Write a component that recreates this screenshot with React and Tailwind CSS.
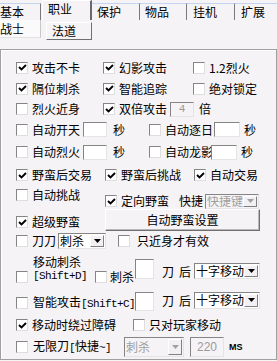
import React from "react";
import clsx from "clsx";

const MONO = "font-['Liberation_Mono',monospace] text-[11px] tracking-[-0.6px]";

// classic sunken checkbox
const Cb = ({ on, className }) => (
  <span
    className={clsx(
      "w-[12px] h-[12px] shrink-0 bg-white border border-t-[#858585] border-l-[#858585] border-b-[#dedede] border-r-[#dedede] flex items-center justify-center",
      className
    )}
  >
    {on && (
      <svg width="9" height="9" viewBox="0 0 9 9">
        <path d="M1 4 L3.5 6.5 L8 2" stroke="#000" strokeWidth="1.9" fill="none" />
      </svg>
    )}
  </span>
);

const Check = ({ on, children, className }) => (
  <div className={clsx("flex items-center gap-[4px] shrink-0", className)}>
    <Cb on={on} />
    <span className="whitespace-nowrap">{children}</span>
  </div>
);

const Field = ({ value, disabled, className }) => (
  <div
    className={clsx(
      "shrink-0 flex items-center justify-center border border-t-[#858585] border-l-[#858585] border-b-[#e4e4e4] border-r-[#e4e4e4]",
      disabled ? "bg-[#f6f3f6] text-[#9a9a9a]" : "bg-white",
      className
    )}
  >
    {value}
  </div>
);

const Arrow = ({ disabled }) => (
  <span className="w-[14px] h-full shrink-0 flex items-center justify-center bg-[#f3f0f3] border border-t-white border-l-white border-b-[#808080] border-r-[#808080]">
    <svg width="7" height="4" viewBox="0 0 7 4">
      <path d="M0 0 H7 L3.5 4 Z" fill={disabled ? "#a0a0a0" : "#000"} />
    </svg>
  </span>
);

const Select = ({ value, disabled, className }) => (
  <div
    className={clsx(
      "shrink-0 flex items-stretch border border-t-[#858585] border-l-[#858585] border-b-[#e4e4e4] border-r-[#e4e4e4] p-[1px]",
      disabled ? "bg-[#f6f3f6] text-[#a0a0a0]" : "bg-white",
      className
    )}
  >
    <span className="flex-1 overflow-hidden whitespace-nowrap flex items-center">{value}</span>
    <Arrow disabled={disabled} />
  </div>
);

export default function App() {
  return (
    <div className="w-[277px] h-[361px] bg-[#f6f3f6] text-black text-[12px] leading-[14px] font-['Noto_Sans_CJK_SC',sans-serif] overflow-hidden select-none">
      {/* main tabs */}
      <div className="flex h-[20px]">
        <div className="w-[41px] mt-[3px] border-t border-t-[#c4d4ee] border-r border-r-[#7a7a7a] flex items-center">基本</div>
        <div className="ml-[1px] w-[50px] border-t border-l border-t-white border-l-white border-r-2 border-r-[#6a6a6a] pl-[5px] pt-[1px]">职业</div>
        <div className="w-[48px] mt-[3px] border-t border-t-[#c4d4ee] border-r border-r-[#7a7a7a] pl-[5px] flex items-center">保护</div>
        <div className="w-[47px] mt-[3px] border-t border-t-[#c4d4ee] border-r border-r-[#7a7a7a] pl-[5px] flex items-center">物品</div>
        <div className="w-[48px] mt-[3px] border-t border-t-[#c4d4ee] border-r border-r-[#7a7a7a] pl-[6px] flex items-center">挂机</div>
        <div className="flex-1 mt-[3px] border-t border-t-[#c4d4ee] pl-[6px] flex items-center">扩展</div>
      </div>

      {/* sub tabs */}
      <div className="flex h-[21px]">
        <div className="w-[41px] h-[18px] bg-[#fbfafb] border-r border-b border-r-[#c8c8c8] border-b-[#e2e2e2] flex items-center">战士</div>
        <div className="ml-[5px] mt-[2px] w-[46px] h-[18px] border border-t-white border-l-white border-r-[#707070] border-b-[#707070] pl-[5px] flex items-center">法道</div>
      </div>

      {/* panel */}
      <div className="mt-[8px] h-[311px] border border-[#a0a0a0] shadow-[inset_1px_1px_0_#ffffff] pt-[7px]">
        <div className="flex items-center h-[21px] pl-[15px]">
          <Check on className="w-[87px]">攻击不卡</Check>
          <Check on className="w-[90px]">幻影攻击</Check>
          <Check>1.2烈火</Check>
        </div>
        <div className="flex items-center h-[21px] pl-[15px]">
          <Check on className="w-[87px]">隔位刺杀</Check>
          <Check on className="w-[90px]">智能追踪</Check>
          <Check>绝对锁定</Check>
        </div>
        <div className="flex items-center h-[20px] pl-[15px]">
          <Check className="w-[87px]">烈火近身</Check>
          <Check on>双倍攻击</Check>
          <Field value="4" disabled className="ml-[3px] w-[24px] h-[15px] font-['Liberation_Mono',monospace] text-[11px]" />
          <span className="ml-[5px]">倍</span>
        </div>
        <div className="flex items-center h-[21px] pl-[15px]">
          <div className="w-[133px] flex items-center shrink-0">
            <Check>自动开天</Check>
            <Field className="ml-[3px] w-[24px] h-[15px]" />
            <span className="ml-[6px]">秒</span>
          </div>
          <Check>自动逐日</Check>
          <Field className="ml-[1px] w-[26px] h-[15px]" />
          <span className="ml-[4px]">秒</span>
        </div>
        <div className="flex items-center h-[24px] pl-[15px]">
          <div className="w-[133px] flex items-center shrink-0">
            <Check>自动烈火</Check>
            <Field className="ml-[3px] w-[24px] h-[15px]" />
            <span className="ml-[6px]">秒</span>
          </div>
          <Check>自动龙影</Check>
          <Field className="-ml-[2px] w-[26px] h-[15px] relative" />
          <span className="ml-[4px]">秒</span>
        </div>
        <div className="flex items-center h-[22px] pl-[15px]">
          <Check on className="w-[89px]">野蛮后交易</Check>
          <Check on className="w-[89px]">野蛮后挑战</Check>
          <Check on>自动交易</Check>
        </div>
        <div className="flex items-center h-[22px] pl-[15px]">
          <Check className="w-[89px] -translate-y-[2px]">自动挑战</Check>
          <div className="flex items-center translate-y-[4px]">
            <Check on>定向野蛮</Check>
            <span className="ml-[10px]">快捷</span>
            <Select value="快捷键" disabled className="ml-[2px] w-[54px] h-[15px]" />
          </div>
        </div>
        <div className="flex items-center h-[24px] pl-[15px]">
          <Check on className="w-[89px] translate-y-[2px]">超级野蛮</Check>
          <button className="w-[155px] h-[22px] bg-[#f6f3f6] border border-t-white border-l-white border-b-[#707070] border-r-[#707070] shadow-[inset_-1px_-1px_0_#b8b8b8] flex items-center justify-center">
            自动野蛮设置
          </button>
        </div>
        <div className="flex items-center h-[17px] pl-[15px]">
          <Cb />
          <span className="ml-[4px]">刀刀</span>
          <Select value="刺杀" className="ml-[2px] w-[48px] h-[16px]" />
          <Cb className="ml-[12px]" />
          <span className="ml-[7px]">只近身才有效</span>
        </div>
        <div className="flex items-center h-[40px] pl-[15px]">
          <div className="w-[79px] flex items-center shrink-0">
            <Cb className="translate-y-[8px]" />
            <div className="ml-[5px] flex flex-col leading-[14px]">
              <span>移动刺杀</span>
              <span className={MONO}>[Shift+D]</span>
            </div>
          </div>
          <div className="flex items-center gap-[3px] translate-y-[8px]">
            <Cb />
            <span>刺杀</span>
          </div>
          <Field className="ml-[1px] w-[19px] h-[20px]" />
          <span className="ml-[8px] translate-y-[3px]">刀</span>
          <span className="ml-[5px] translate-y-[3px]">后</span>
          <Select value="十字移动" className="ml-[3px] w-[66px] h-[16px] translate-y-[2px]" />
        </div>
        <div className="flex items-center h-[24px] pl-[15px]">
          <div className="w-[118px] flex items-center shrink-0 translate-y-[2px]">
            <Cb />
            <span className="ml-[5px] whitespace-nowrap">
              智能攻击<span className={MONO}>[Shift+C]</span>
            </span>
          </div>
          <Field className="ml-[1px] w-[19px] h-[19px]" />
          <span className="ml-[8px]">刀</span>
          <span className="ml-[5px]">后</span>
          <Select value="十字移动" className="ml-[3px] w-[66px] h-[17px] -translate-y-[1px]" />
        </div>
        <div className="flex items-center h-[24px] pl-[15px]">
          <Check on className="w-[117px]">移动时绕过障碍</Check>
          <Check>只对玩家移动</Check>
        </div>
        <div className="flex items-center h-[20px] pl-[15px]">
          <div className="w-[108px] flex items-center shrink-0">
            <Cb />
            <span className="ml-[5px] whitespace-nowrap">
              无限刀<span className={MONO}>[</span>快捷<span className={MONO}>~]</span>
            </span>
          </div>
          <Select value="刺杀" disabled className="w-[60px] h-[20px]" />
          <Field value="220" disabled className="ml-[6px] w-[34px] h-[20px] font-['Liberation_Sans',sans-serif] text-[12px]" />
          <span className="ml-[5px] font-['Liberation_Sans',sans-serif] font-bold text-[9px]">MS</span>
        </div>
      </div>
    </div>
  );
}
